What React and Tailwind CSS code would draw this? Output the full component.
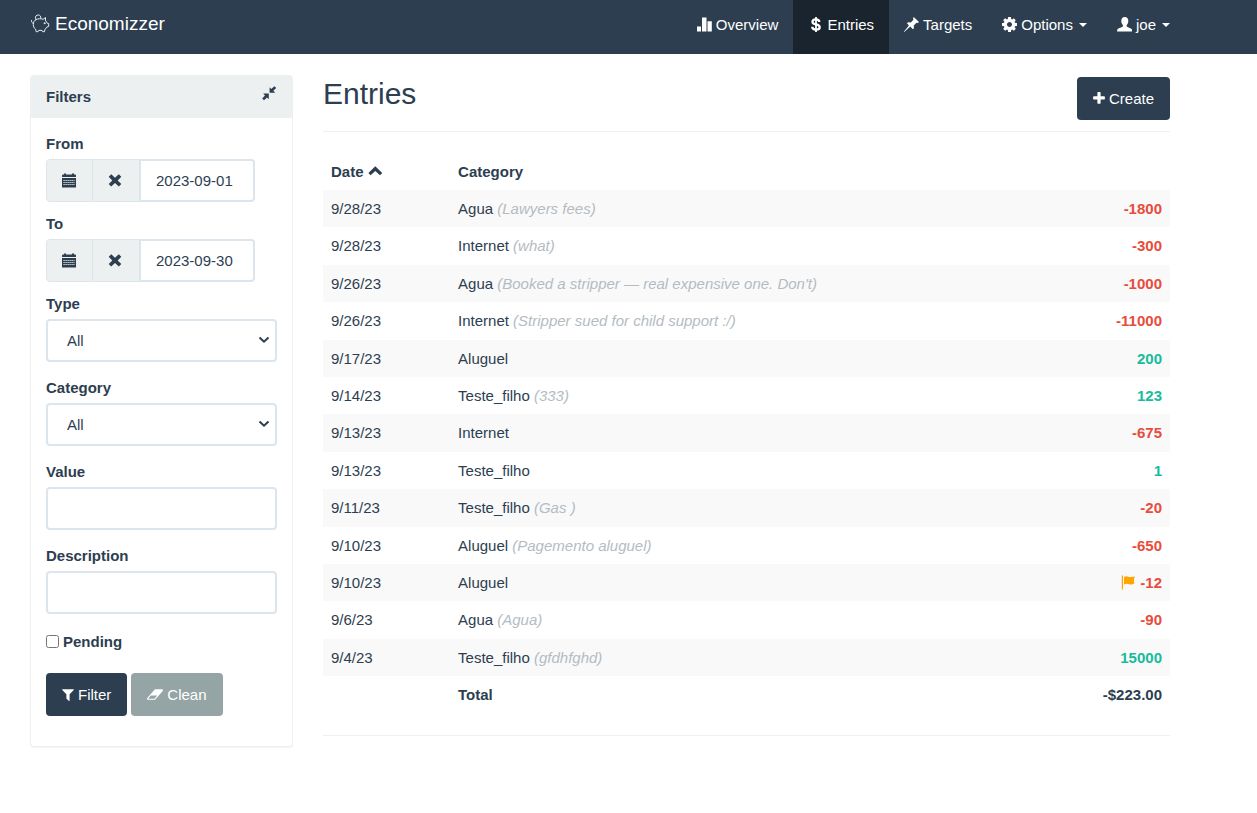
const entries = [
  { date: "9/28/23", category: "Agua", note: "Lawyers fees", value: "-1800" },
  { date: "9/28/23", category: "Internet", note: "what", value: "-300" },
  { date: "9/26/23", category: "Agua", note: "Booked a stripper — real expensive one. Don't", value: "-1000" },
  { date: "9/26/23", category: "Internet", note: "Stripper sued for child support :/", value: "-11000" },
  { date: "9/17/23", category: "Aluguel", value: "200" },
  { date: "9/14/23", category: "Teste_filho", note: "333", value: "123" },
  { date: "9/13/23", category: "Internet", value: "-675" },
  { date: "9/13/23", category: "Teste_filho", value: "1" },
  { date: "9/11/23", category: "Teste_filho", note: "Gas ", value: "-20" },
  { date: "9/10/23", category: "Aluguel", note: "Pagemento aluguel", value: "-650" },
  { date: "9/10/23", category: "Aluguel", value: "-12", flagged: true },
  { date: "9/6/23", category: "Agua", note: "Agua", value: "-90" },
  { date: "9/4/23", category: "Teste_filho", note: "gfdhfghd", value: "15000" },
];

function Glyph({ children, className = "" }) {
  return (
    <svg viewBox="0 0 15 15" fill="currentColor" aria-hidden="true" className={`size-[15px] shrink-0 ${className}`}>
      {children}
    </svg>
  );
}

const PiggyIcon = () => (
  <svg viewBox="0 0 20 20" fill="none" stroke="currentColor" strokeWidth="1" strokeLinejoin="round" strokeLinecap="round" aria-hidden="true" className="size-5 shrink-0 opacity-90">
    <path d="M6 5.500C8 4.500 11.200 4.500 13 5.300L15.500 3.500V6.800C16.400 7.600 16.900 8.400 17.200 9.200L18.700 9.600V12.400L17 13C16.500 14 15.800 14.700 15 15.200L14.500 17.700H12.600L12 16.400H8.600L8 17.700H6.100L5.600 15.200C4.100 14.100 3.300 12.600 3.300 10.500C3.300 8.300 4.300 6.500 6 5.500Z" />
    <path d="M5.400 4.300C5 2.300 6.400 1 8.200 1S11.200 2.300 10.800 4.200" />
    <path d="M3.300 9.300C2 9.100 1.400 8.200 1.500 6.500" />
    <circle cx="14.500" cy="9.200" r=".5" fill="currentColor" />
  </svg>
);

const StatsIcon = () => (
  <Glyph><path d="M0 9.500h4V14.500H0zM5 .5h4.500v14H5zM10.500 4.200h4.300v10.300h-4.300z" /></Glyph>
);
const DollarIcon = () => (
  <Glyph>
    <path d="M11.300 5C11.200 3.300 9.900 2.400 7.900 2.400S4.500 3.300 4.500 4.900C4.500 8.300 11.700 6.300 11.700 10C11.700 11.800 10.100 12.700 8 12.700S4.300 11.700 4.200 9.800" fill="none" stroke="currentColor" strokeWidth="2.300" />
    <path d="M7.100 0h1.800v15H7.100z" />
  </Glyph>
);
const PushpinIcon = () => (
  <Glyph><path d="M9.700 0 15 5 13.800 6 12.500 5.800 9.800 8.500 9.900 11.300 8.900 12.200 6.200 9.600.3 15 0 14.600 4.900 8.400 3 6.300 4 5.300 6.800 5.400 9.400 2.700 9.100 1.200Z" /></Glyph>
);
const CogIcon = () => (
  <svg viewBox="128 128 1536 1536" fill="currentColor" aria-hidden="true" className="size-[15px] shrink-0">
    <path d="M1152 896q0-106-75-181t-181-75-181 75-75 181 75 181 181 75 181-75 75-181zm512-109v222q0 12-8 23t-20 13l-185 28q-19 54-39 91 35 50 107 138 10 12 10 25t-9 23q-27 37-99 108t-94 71q-12 0-26-9l-138-108q-44 23-91 38-16 136-29 186-7 28-36 28h-222q-14 0-24.500-8.500t-11.500-21.500l-28-184q-49-16-90-37l-141 107q-10 9-25 9-14 0-25-11-126-114-165-168-7-10-7-23 0-12 8-23 15-21 51-66.500t54-70.500q-27-50-41-99l-183-27q-13-2-21-12.500t-8-23.500v-222q0-12 8-23t19-13l186-28q14-46 39-92-40-57-107-138-10-12-10-24 0-10 9-23 26-36 98.500-107.500t94.500-71.500q13 0 26 10l138 107q44-23 91-38 16-136 29-186 7-28 36-28h222q14 0 24.500 8.500t11.500 21.500l28 184q49 16 90 37l142-107q9-9 24-9 13 0 25 10 129 119 165 170 7 8 7 22 0 12-8 23-15 21-51 66.500t-54 70.500q26 50 41 98l183 28q13 2 21 12.500t8 23.500z" />
  </svg>
);
const UserIcon = () => (
  <Glyph><path d="M7.800 0C10 0 11.400 1.500 11.300 3.900C11.300 5.700 10.700 6.900 9.700 7.900V9.300C9.700 10.300 14.200 11 14.900 12.400L15.200 14.600H0L.4 12.400C1.300 11 5.900 10.300 5.900 9.300V7.900C4.900 6.900 4.300 5.700 4.300 3.900C4.200 1.500 5.600 0 7.800 0Z" /></Glyph>
);
const CalendarIcon = () => (
  <Glyph>
    <path d="M2 .4h2v1h6v-1h2v1h1.500l.5 1V4H0V2.400l.5-1H2zM0 5h14v9.600H0z" />
    <path d="M1.500 7.500h11M1.500 9.500h11M1.500 11.500h11" stroke="#ecf0f1" strokeWidth="1" strokeDasharray="1.200 .8" />
  </Glyph>
);
const RemoveIcon = () => (
  <Glyph><path d="M3.200 1.200 7 4.800 10.800 1.200 13.300 3.700 9.700 7.400 13.300 11.100 10.800 13.600 7 10 3.200 13.600.7 11.100 4.300 7.400.7 3.700Z" /></Glyph>
);
const ResizeIcon = () => (
  <Glyph><path d="M7.600 1.200 9.300 3 12.400.2 14.200 2 11.300 4.800 13.200 6.800H7.600ZM6.800 7.600V13.200L5 11.400 2 14.200.2 12.400 3 9.400 1.200 7.600Z" /></Glyph>
);
const ChevronUpIcon = () => (
  <Glyph><path d="M7.300 2.200 14.200 9.100 12 11.300 7.300 6.900 2.600 11.300.4 9.100Z" /></Glyph>
);
const ChevronDownIcon = () => (
  <svg viewBox="0 0 12 8" fill="none" stroke="currentColor" strokeWidth="2" aria-hidden="true" className="pointer-events-none absolute top-[17px] right-[7px] h-2 w-3">
    <path d="M1.500 1.500 6 5.700 10.500 1.500" />
  </svg>
);
const FlagIcon = () => (
  <Glyph><path d="M.8.500H2v14H.8zM3 2C5.500-.2 7.800 2.700 10.300 2Q12.100 1.600 13.800 1.400L12.900 4.900 13.300 8.300C11.400 10.200 8.900 9.600 7.300 9Q4.800 8.400 3 9.500Z" /></Glyph>
);
const PlusIcon = () => (
  <svg viewBox="192 0 1408 1792" fill="currentColor" aria-hidden="true" className="h-[15px] w-3 shrink-0">
    <path d="M1600 736v192q0 40-28 68t-68 28h-416v416q0 40-28 68t-68 28h-192q-40 0-68-28t-28-68v-416h-416q-40 0-68-28t-28-68v-192q0-40 28-68t68-28h416v-416q0-40 28-68t68-28h192q40 0 68 28t28 68v416h416q40 0 68 28t28 68z" />
  </svg>
);
const FilterIcon = () => (
  <svg viewBox="192 0 1408 1792" fill="currentColor" aria-hidden="true" className="h-[15px] w-3 shrink-0">
    <path d="M1595 295q17 41-14 70l-493 493v742q0 42-39 59-13 5-25 5-27 0-45-19l-256-256q-19-19-19-45v-486l-493-493q-31-29-14-70 17-39 59-39h1280q42 0 59 39z" />
  </svg>
);
const EraserIcon = () => (
  <svg viewBox="64 0 1920 1792" fill="currentColor" aria-hidden="true" className="h-[15px] w-4 shrink-0">
    <path d="M960 1408l336-384h-768l-336 384h768zm1013-1077q15 34 9.500 71.500t-30.500 65.500l-896 1024q-38 44-96 44h-768q-38 0-69.500-20.500t-47.500-54.500q-15-34-9.500-71.500t30.500-65.500l896-1024q38-44 96-44h768q38 0 69.500 20.500t47.500 54.500z" />
  </svg>
);
const Caret = () => (
  <svg viewBox="0 0 8 4" fill="currentColor" aria-hidden="true" className="ml-[2px] h-1 w-2 shrink-0">
    <path d="M0 0h8L4 4z" />
  </svg>
);

function NavLink({ icon, label, active, menu }) {
  return (
    <li>
      <a href="#" className={`flex items-center gap-1 px-[15px] pt-[14px] pb-[19px] ${active ? "bg-[#1a242f]" : ""}`}>
        {icon}
        {label}
        {menu && <Caret />}
      </a>
    </li>
  );
}

const fieldClass = "h-[43px] w-full rounded border-2 border-[#dce4ec] bg-white";
const labelClass = "block mb-[5px] font-bold";

function DateField({ id, label, value }) {
  return (
    <div className="mb-[11px]">
      <label htmlFor={id} className={labelClass}>{label}</label>
      <div className="flex h-[43px] w-[209px]">
        <button type="button" aria-label={`Pick ${label} date`} className="flex w-[47px] items-center rounded-l border border-[#dce4ec] bg-[#ecf0f1] pl-[15px]">
          <CalendarIcon />
        </button>
        <button type="button" aria-label={`Clear ${label} date`} className="flex w-[46px] items-center border-y border-[#dce4ec] bg-[#ecf0f1] pl-[15px]">
          <RemoveIcon />
        </button>
        <input id={id} type="text" defaultValue={value} className="min-w-0 flex-1 rounded-r border-2 border-[#dce4ec] bg-white px-[15px]" />
      </div>
    </div>
  );
}

function SelectField({ id, label }) {
  return (
    <div className="mb-[15px]">
      <label htmlFor={id} className={labelClass}>{label}</label>
      <div className="relative">
        <select id={id} className={`${fieldClass} appearance-none px-[19px]`}>
          <option>All</option>
        </select>
        <ChevronDownIcon />
      </div>
    </div>
  );
}

function TextField({ id, label }) {
  return (
    <div className="mb-[15px]">
      <label htmlFor={id} className={labelClass}>{label}</label>
      <input id={id} type="text" className={`${fieldClass} px-[15px]`} />
    </div>
  );
}

function Filters() {
  return (
    <form className="self-start rounded border border-[#ecf0f1] bg-white shadow-[0_1px_1px_rgba(0,0,0,0.05)]">
      <div className="flex items-start justify-between bg-[#ecf0f1] px-[15px] pt-[10px] pb-[11px]">
        <h2 className="font-bold">Filters</h2>
        <button type="button" aria-label="Collapse filters"><ResizeIcon /></button>
      </div>
      <div className="px-[15px] pt-[15px] pb-[30px]">
        <DateField id="from" label="From" value="2023-09-01" />
        <DateField id="to" label="To" value="2023-09-30" />
        <SelectField id="type" label="Type" />
        <SelectField id="category" label="Category" />
        <TextField id="value" label="Value" />
        <TextField id="description" label="Description" />
        <label className="flex items-center gap-1 pt-[2px] font-bold">
          <input type="checkbox" className="size-[13px]" />
          Pending
        </label>
        <div className="mt-[21px] flex gap-1">
          <button type="submit" className="flex h-[43px] items-center gap-1 rounded bg-[#2c3e50] px-4 text-white">
            <FilterIcon />
            Filter
          </button>
          <button type="reset" className="flex h-[43px] items-center gap-1 rounded bg-[#95a5a6] px-4 text-white">
            <EraserIcon />
            Clean
          </button>
        </div>
      </div>
    </form>
  );
}

function EntriesTable() {
  return (
    <table className="mt-[21px] w-full border-collapse">
      <thead>
        <tr className="h-[37px] text-left">
          <th className="w-[15%] px-2">
            <a href="#" className="flex items-center gap-1">Date <ChevronUpIcon /></a>
          </th>
          <th className="px-2">Category</th>
          <th aria-label="Value" className="px-2" />
        </tr>
      </thead>
      <tbody>
        {entries.map((entry, i) => (
          <tr key={i} className="h-[37px] align-top odd:bg-[#f9f9f9] nth-[5n+2]:h-[38px] nth-[5n+4]:h-[38px]">
            <td className="px-2 pt-2">{entry.date}</td>
            <td className="px-2 pt-2">
              {entry.category}
              {entry.note && <em className="text-[#b4bcc2]"> ({entry.note})</em>}
            </td>
            <td className={`px-2 pt-2 font-bold ${entry.value.startsWith("-") ? "text-[#e74c3c]" : "text-[#18bc9c]"}`}>
              <div className="flex items-center justify-end gap-1">
                {entry.flagged && <span className="text-[#ffa500]"><FlagIcon /></span>}
                {entry.value}
              </div>
            </td>
          </tr>
        ))}
      </tbody>
      <tfoot>
        <tr className="h-[37px] font-bold">
          <td />
          <td className="px-2">Total</td>
          <td className="px-2 text-right">-$223.00</td>
        </tr>
      </tfoot>
    </table>
  );
}

export default function App() {
  return (
    <div className="min-h-screen bg-white font-['Liberation_Sans',Arial,sans-serif] text-[15px] leading-[21px] text-[#2c3e50]">
      <header className="bg-[#2c3e50] text-white">
        <nav className="flex max-w-[1200px] items-start justify-between pr-[15px] pl-[30px]">
          <a href="#" className="flex items-center gap-[5px] pt-[13px] text-[19px]">
            <PiggyIcon />
            Economizzer
          </a>
          <ul className="flex">
            <NavLink icon={<StatsIcon />} label="Overview" />
            <NavLink icon={<DollarIcon />} label="Entries" active />
            <NavLink icon={<PushpinIcon />} label="Targets" />
            <NavLink icon={<CogIcon />} label="Options" menu />
            <NavLink icon={<UserIcon />} label="joe" menu />
          </ul>
        </nav>
      </header>
      <div className="grid max-w-[1200px] grid-cols-[263px_1fr] gap-[30px] px-[30px] pt-[21px]">
        <Filters />
        <main>
          <div className="flex items-start justify-between border-b border-[#ecf0f1] pt-[2px] pb-[11px]">
            <h1 className="text-[30px] leading-[33px]">Entries</h1>
            <button type="button" className="flex h-[43px] items-center gap-1 rounded bg-[#2c3e50] px-4 text-white">
              <PlusIcon />
              Create
            </button>
          </div>
          <EntriesTable />
          <hr className="mt-[22px] border-[#ecf0f1]" />
        </main>
      </div>
    </div>
  );
}
